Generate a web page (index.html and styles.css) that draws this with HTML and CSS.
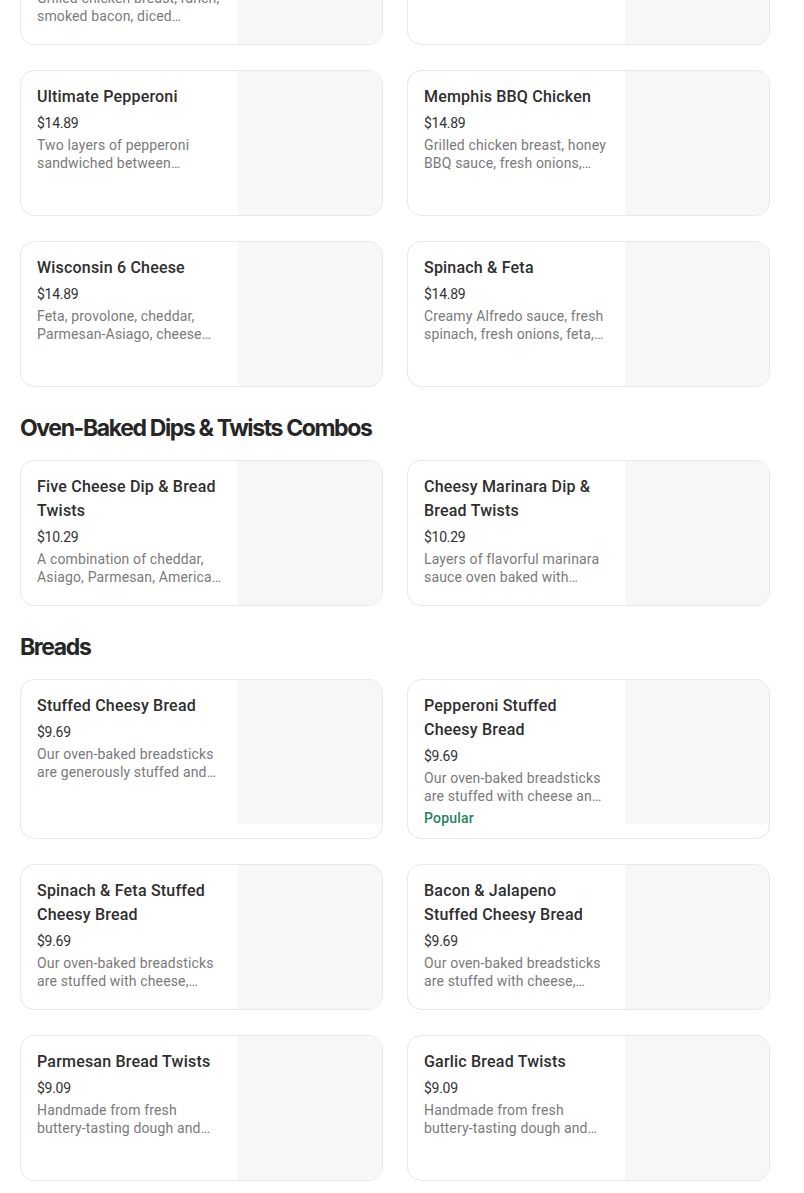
FILE: index.html
```html
<!DOCTYPE html>
<html lang="en">
<head>
<meta charset="utf-8">
<title>Menu</title>
<link rel="stylesheet" href="styles.css">
</head>
<body>
<main class="menu">
  <section class="section">
    <div class="grid">
      <article class="card">
        <div class="info">
          <h3 class="title">Cali Chicken Bacon Ranch</h3>
          <div class="price">$14.89</div>
          <p class="desc">Grilled chicken breast, ranch, smoked bacon, diced tomatoes, provolone and cheddar</p>
        </div>
        <div class="thumb"></div>
      </article>
      <article class="card">
        <div class="info">
          <h3 class="title">Honolulu Hawaiian</h3>
          <div class="price">$14.89</div>
          <p class="desc">Ham, pineapple, bacon, peppers</p>
        </div>
        <div class="thumb"></div>
      </article>
      <article class="card">
        <div class="info">
          <h3 class="title">Ultimate Pepperoni</h3>
          <div class="price">$14.89</div>
          <p class="desc">Two layers of pepperoni sandwiched between provolone, Parmesan-Asiago and oregano</p>
        </div>
        <div class="thumb"></div>
      </article>
      <article class="card">
        <div class="info">
          <h3 class="title">Memphis BBQ Chicken</h3>
          <div class="price">$14.89</div>
          <p class="desc">Grilled chicken breast, honey BBQ sauce, fresh onions, provolone and cheddar</p>
        </div>
        <div class="thumb"></div>
      </article>
      <article class="card">
        <div class="info">
          <h3 class="title">Wisconsin 6 Cheese</h3>
          <div class="price">$14.89</div>
          <p class="desc">Feta, provolone, cheddar, Parmesan-Asiago, cheese made with 100% real mozzarella</p>
        </div>
        <div class="thumb"></div>
      </article>
      <article class="card">
        <div class="info">
          <h3 class="title">Spinach &amp; Feta</h3>
          <div class="price">$14.89</div>
          <p class="desc">Creamy Alfredo sauce, fresh spinach, fresh onions, feta, Parmesan-Asiago and provolone</p>
        </div>
        <div class="thumb"></div>
      </article>
    </div>
  </section>

  <section class="section">
    <h2 class="heading">Oven-Baked Dips &amp; Twists Combos</h2>
    <div class="grid">
      <article class="card">
        <div class="info">
          <h3 class="title">Five Cheese Dip &amp; Bread Twists</h3>
          <div class="price">$10.29</div>
          <p class="desc">A combination of cheddar, Asiago, Parmesan, American and mozzarella cheese, oven baked</p>
        </div>
        <div class="thumb"></div>
      </article>
      <article class="card">
        <div class="info">
          <h3 class="title">Cheesy Marinara Dip &amp; Bread Twists</h3>
          <div class="price">$10.29</div>
          <p class="desc">Layers of flavorful marinara sauce oven baked with mozzarella cheese</p>
        </div>
        <div class="thumb"></div>
      </article>
    </div>
  </section>

  <section class="section">
    <h2 class="heading">Breads</h2>
    <div class="grid">
      <article class="card">
        <div class="info">
          <h3 class="title">Stuffed Cheesy Bread</h3>
          <div class="price">$9.69</div>
          <p class="desc">Our oven-baked breadsticks are generously stuffed and covered with a blend of cheese</p>
        </div>
        <div class="thumb"></div>
      </article>
      <article class="card">
        <div class="info">
          <h3 class="title">Pepperoni Stuffed Cheesy Bread</h3>
          <div class="price">$9.69</div>
          <p class="desc">Our oven-baked breadsticks are stuffed with cheese and covered in pepperoni</p>
          <div class="tag">Popular</div>
        </div>
        <div class="thumb"></div>
      </article>
      <article class="card">
        <div class="info">
          <h3 class="title">Spinach &amp; Feta Stuffed Cheesy Bread</h3>
          <div class="price">$9.69</div>
          <p class="desc">Our oven-baked breadsticks are stuffed with cheese, fresh spinach and feta</p>
        </div>
        <div class="thumb"></div>
      </article>
      <article class="card">
        <div class="info">
          <h3 class="title">Bacon &amp; Jalapeno Stuffed Cheesy Bread</h3>
          <div class="price">$9.69</div>
          <p class="desc">Our oven-baked breadsticks are stuffed with cheese, smoked bacon and jalapenos</p>
        </div>
        <div class="thumb"></div>
      </article>
      <article class="card">
        <div class="info">
          <h3 class="title">Parmesan Bread Twists</h3>
          <div class="price">$9.09</div>
          <p class="desc">Handmade from fresh buttery-tasting dough and baked to a golden brown</p>
        </div>
        <div class="thumb"></div>
      </article>
      <article class="card">
        <div class="info">
          <h3 class="title">Garlic Bread Twists</h3>
          <div class="price">$9.09</div>
          <p class="desc">Handmade from fresh buttery-tasting dough and baked to a golden brown</p>
        </div>
        <div class="thumb"></div>
      </article>
    </div>
  </section>
</main>
</body>
</html>
```

FILE: styles.css
```css
* { box-sizing: border-box; }

html, body {
  margin: 0;
  padding: 0;
  background: #ffffff;
}

body {
  font-family: Roboto, "Noto Sans", "Liberation Sans", sans-serif;
  color: #2a2a2a;
}

.menu {
  width: 750px;
  margin: -101px 0 0 20px;
}

.section {
  display: flex;
  flex-direction: column;
}

.heading {
  margin: 25px 0 16px;
  font-family: Inter, Roboto, sans-serif;
  font-size: 23px;
  line-height: 32px;
  font-weight: 700;
  letter-spacing: -0.06em;
  color: #262626;
}

.grid {
  display: grid;
  grid-template-columns: 363px 363px;
  column-gap: 24px;
  row-gap: 25px;
}

.card {
  display: flex;
  align-items: flex-start;
  border: 1px solid #e8e8e8;
  border-radius: 14px;
  overflow: hidden;
  background: #ffffff;
  min-height: 146px;
}

.info {
  flex: 1 1 auto;
  min-width: 0;
  padding: 14px 16px 10px;
}

.title {
  margin: 0;
  font-size: 16px;
  line-height: 24px;
  font-weight: 500;
  letter-spacing: 0.2px;
  color: #2e2e2e;
}

.price {
  margin-top: 4px;
  font-size: 14px;
  line-height: 20px;
  color: #333333;
  letter-spacing: -0.02em;
}

.desc {
  margin: 3px 0 0;
  font-size: 14px;
  line-height: 18px;
  letter-spacing: 0.15px;
  color: #7a7a7a;
  display: -webkit-box;
  -webkit-line-clamp: 2;
  -webkit-box-orient: vertical;
  overflow: hidden;
}

.tag {
  margin-top: 3px;
  font-size: 14px;
  line-height: 20px;
  font-weight: 500;
  letter-spacing: 0.2px;
  color: #1f8460;
}

.thumb {
  flex: none;
  width: 144px;
  height: 144px;
  background: #f7f7f7;
}
```
